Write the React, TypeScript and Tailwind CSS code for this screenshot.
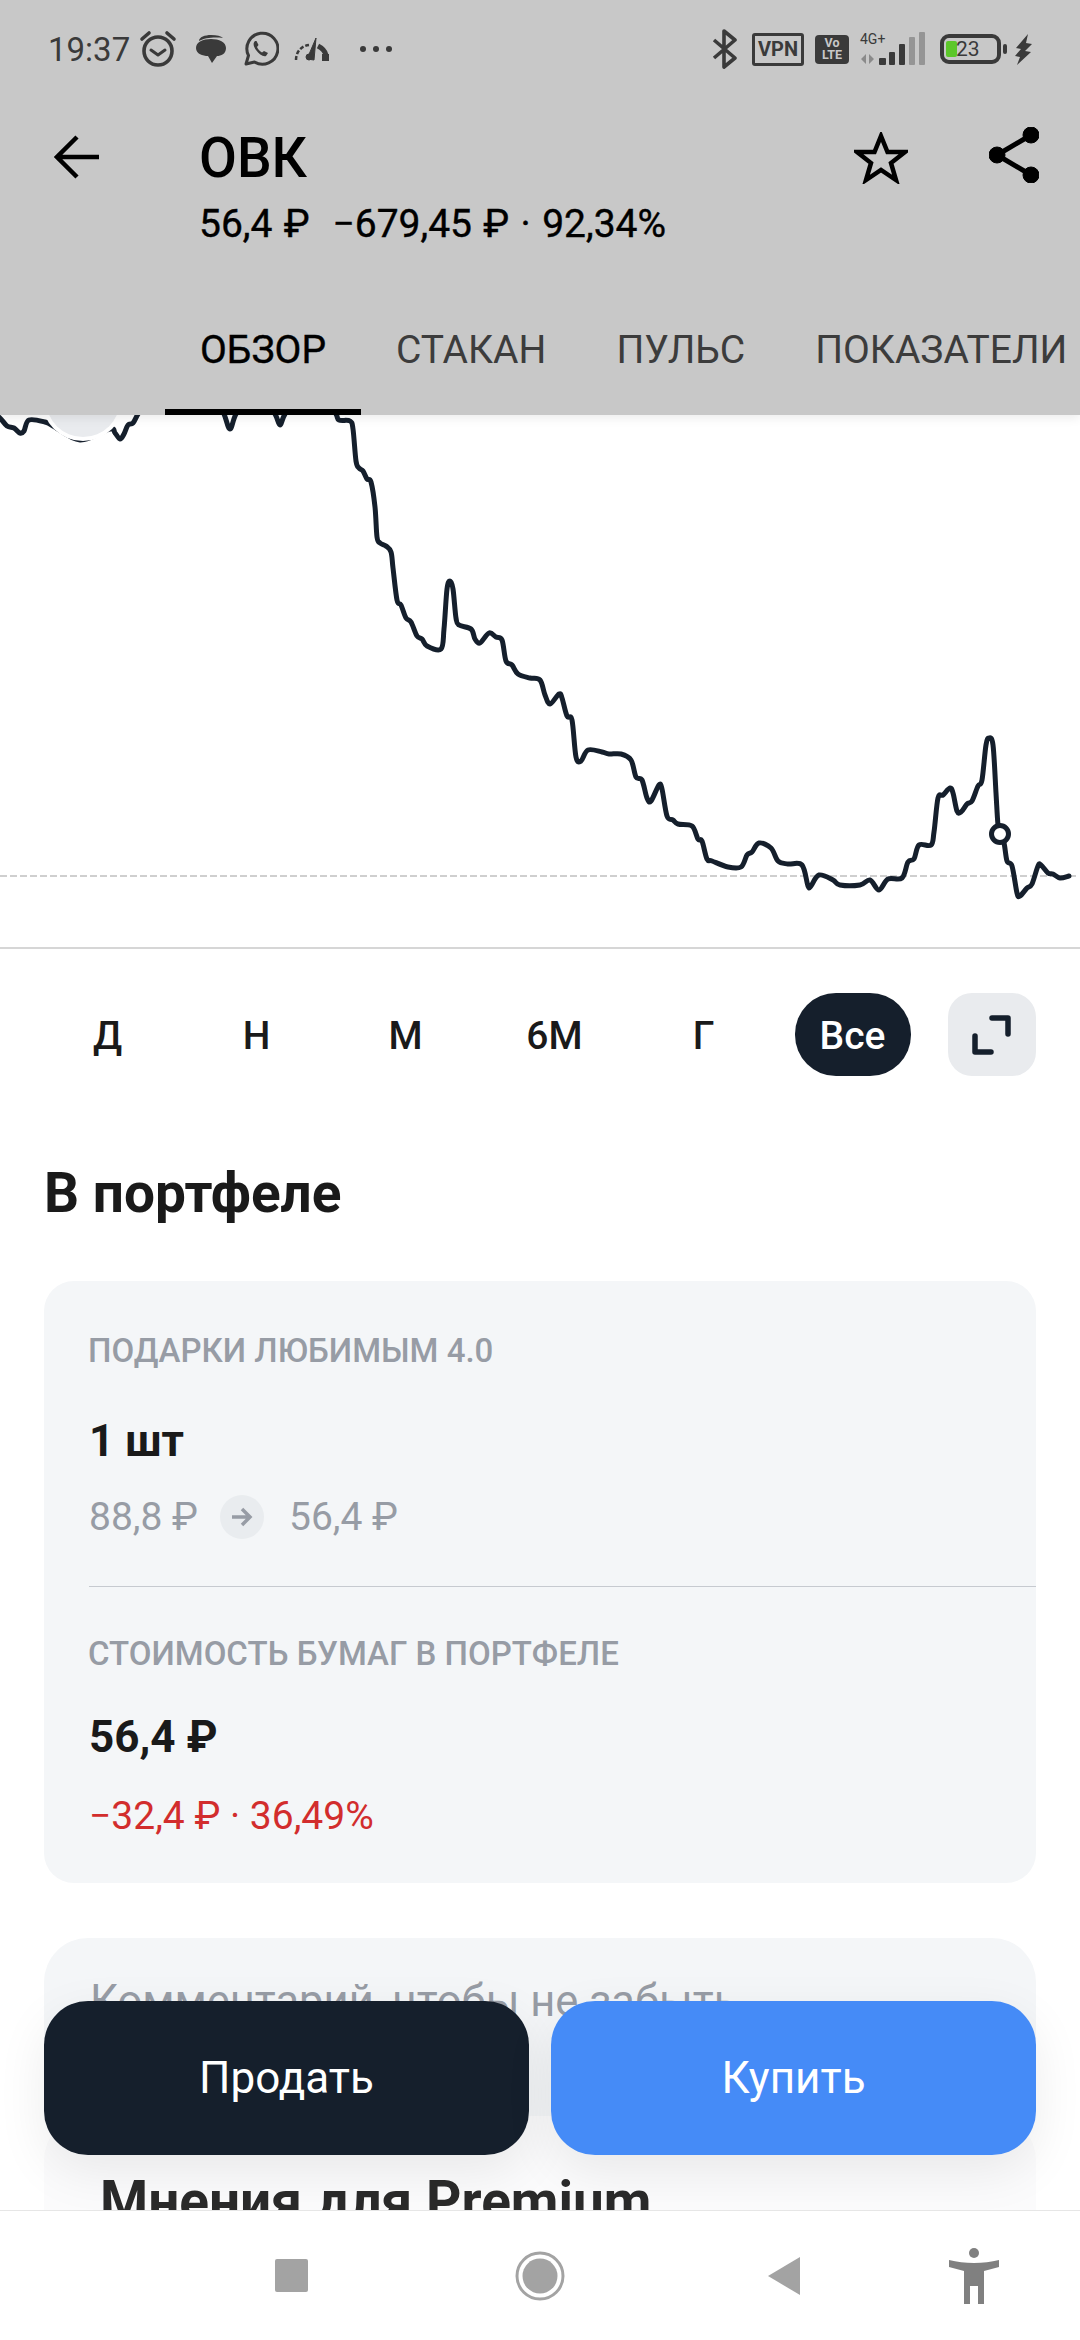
const tabs = ["ОБЗОР", "СТАКАН", "ПУЛЬС", "ПОКАЗАТЕЛИ"];
const periods = ["Д", "Н", "М", "6М", "Г", "Все"];

const chartPoints: [number, number][] = [
  [-6, 414], [0, 418], [7, 426], [14, 428], [20, 433], [24, 431], [29, 420], [45, 422], [53, 426], [80, 440], [110, 429], [115, 433],
  [120, 439], [124, 434], [128, 425], [133, 423], [138, 414], [150, 395], [215, 395], [224, 414], [230, 429], [236, 414], [250, 395],
  [262, 395], [275, 414], [280, 425], [285, 414], [300, 395], [325, 395], [336, 414], [339, 420], [350, 421], [353, 429], [356, 461],
  [359, 468], [363, 471], [367, 479], [371, 482], [375, 507], [377, 537], [380, 543], [386, 546], [391, 552], [393, 568], [397, 600],
  [401, 605], [406, 618], [411, 622], [417, 636], [422, 639], [427, 646], [441, 649], [444, 629], [447, 589], [450, 581], [453, 589],
  [456, 618], [459, 625], [471, 629], [475, 639], [480, 643], [489, 633], [496, 637], [502, 640], [506, 661], [512, 665], [518, 674],
  [530, 678], [540, 680], [545, 695], [550, 704], [559, 694], [562, 698], [567, 716], [572, 720], [576, 757], [581, 761], [588, 750],
  [602, 752], [609, 754], [621, 754], [631, 760], [636, 777], [642, 780], [647, 798], [651, 801], [659, 785], [662, 789], [667, 816],
  [673, 820], [678, 824], [692, 826], [698, 839], [702, 841], [707, 859], [712, 861], [728, 867], [741, 867], [747, 855], [752, 852],
  [759, 843], [771, 848], [778, 861], [788, 864], [802, 865], [808, 886], [811, 886], [819, 875], [833, 880], [840, 885], [860, 885],
  [870, 880], [879, 890], [888, 879], [902, 878], [908, 862], [914, 859], [919, 845], [931, 845], [934, 832], [938, 798], [943, 795],
  [950, 788], [953, 793], [957, 811], [961, 812], [967, 804], [972, 801], [978, 786], [982, 780], [986, 745], [989, 738], [993, 745],
  [996, 793], [998, 825], [1000, 834], [1004, 843], [1007, 861], [1012, 866], [1017, 893], [1020, 896], [1027, 888], [1032, 884],
  [1038, 866], [1041, 865], [1048, 873], [1053, 874], [1060, 878], [1069, 876],
];

// catmull-rom through the points so the line doesn't look chopped
function smoothPath(pts: [number, number][]) {
  let d = `M${pts[0][0]} ${pts[0][1]}`;
  for (let i = 0; i < pts.length - 1; i++) {
    const p0 = pts[Math.max(i - 1, 0)];
    const p1 = pts[i];
    const p2 = pts[i + 1];
    const p3 = pts[Math.min(i + 2, pts.length - 1)];
    const c1x = p1[0] + (p2[0] - p0[0]) / 6;
    const c1y = p1[1] + (p2[1] - p0[1]) / 6;
    const c2x = p2[0] - (p3[0] - p1[0]) / 6;
    const c2y = p2[1] - (p3[1] - p1[1]) / 6;
    d += ` C${c1x.toFixed(1)} ${c1y.toFixed(1)} ${c2x.toFixed(1)} ${c2y.toFixed(1)} ${p2[0]} ${p2[1]}`;
  }
  return d;
}

function StatusBar() {
  return (
    <div className="h-[98px] flex items-center justify-between pl-[48px] pr-[47px] text-[#3a3a3a]">
      <div className="flex items-center">
        <span className="text-[33px] leading-none w-[88px]">19:37</span>
        <svg width="42" height="38" viewBox="0 0 42 38" fill="none" stroke="#3a3a3a" strokeWidth="3.6" className="ml-[1px]">
          <circle cx="21" cy="21" r="14" />
          <path d="M14 20l7 5 7-5" strokeWidth="3" strokeLinecap="round" strokeLinejoin="round" />
          <path d="M5 9l7-6M37 9l-7-6" strokeLinecap="round" />
        </svg>
        <svg width="30" height="28" viewBox="0 0 30 28" fill="#3a3a3a" className="ml-[17px]">
          <path d="M3 6C3 2 9 0 15 0c6 0 10 1 12 3-6-1-18-1-24 3z" />
          <path d="M15 4c8 0 15 3 15 9s-5 8-9 8l-5 7-4-7c-5 0-12-2-12-8s7-9 15-9z" />
        </svg>
        <svg width="36" height="36" viewBox="0 0 36 36" fill="none" stroke="#3a3a3a" strokeWidth="3" className="ml-[17px]">
          <path d="M3 33l2.5-8.5A15.5 15.5 0 1 1 11.5 31z" strokeLinejoin="round" />
          <path d="M12 10c-2 2-2 5 1 9s7 7 10 6l2-3-4-2-2 1.500c-2-1-4-3-5-5.500l1.500-2-2-4z" fill="#3a3a3a" stroke="none" />
        </svg>
        <svg width="36" height="25" viewBox="0 0 36 25" fill="none" stroke="#3a3a3a" className="ml-[15px]">
          <path d="M2 23c0-8 5-14 13-15" strokeWidth="2.500" strokeDasharray="4 2" />
          <path d="M24 9c4 2 7 5 8 9" strokeWidth="5" />
          <path d="M13 22L22 1l-2 22z" fill="#3a3a3a" strokeWidth="1" />
          <circle cx="15" cy="20" r="3" fill="#3a3a3a" strokeWidth="1" />
          <rect x="28" y="17" width="7" height="7" fill="#3a3a3a" stroke="none" />
        </svg>
        <div className="flex gap-[7px] ml-[30px]">
          <div className="w-[6px] h-[6px] rounded-full bg-[#3a3a3a]" />
          <div className="w-[6px] h-[6px] rounded-full bg-[#3a3a3a]" />
          <div className="w-[6px] h-[6px] rounded-full bg-[#3a3a3a]" />
        </div>
      </div>
      <div className="flex items-center">
        <svg width="26" height="40" viewBox="0 0 26 40" fill="none" stroke="#3a3a3a" strokeWidth="3.6" strokeLinejoin="round">
          <path d="M2 11l21 18-11 9V2l11 9L2 29" />
        </svg>
        <div className="ml-[14px] w-[52px] h-[33px] border-[3px] border-[#3a3a3a] rounded-[3px] flex items-center justify-center text-[20px] font-bold leading-none">VPN</div>
        <div className="ml-[11px] w-[34px] h-[29px] bg-[#3a3a3a] rounded-[4px] flex flex-col items-center justify-center text-[#c8c8c8] text-[12.500px] font-bold leading-[12.500px]">
          <span>Vo</span>
          <span>LTE</span>
        </div>
        <div className="ml-[11px] w-[66px] h-[34px] flex flex-col justify-between">
          <span className="text-[14px] leading-[14px]">4G+</span>
          <svg width="66" height="34" viewBox="0 0 66 34" className="-mt-[14px]">
            <path d="M6 22v10L1 27zM9 22l5 5-5 5zM15 22v10" fill="#8a8a8a" />
            <rect x="19" y="26" width="7" height="7" rx="1" fill="#3a3a3a" />
            <rect x="29" y="20" width="6" height="13" rx="1" fill="#3a3a3a" />
            <rect x="39" y="12" width="6" height="21" rx="1" fill="#3a3a3a" />
            <rect x="49" y="5" width="6" height="28" rx="1" fill="#959595" />
            <rect x="59" y="0" width="6" height="33" rx="1" fill="#959595" />
          </svg>
        </div>
        <div className="ml-[14px] w-[61px] h-[30px] border-[4px] border-[#3a3a3a] rounded-[9px] flex items-center p-[2px]">
          <div className="w-[11px] h-[16px] bg-[#5cc72a] rounded-[2px] shrink-0" />
          <span className="text-[21px] leading-none text-[#3a3a3a] -ml-[1px]">23</span>
        </div>
        <div className="ml-[2px] w-[4px] h-[10px] bg-[#3a3a3a] rounded-[2px]" />
        <svg width="18" height="31" viewBox="0 0 18 31" fill="#3a3a3a" className="ml-[8px]">
          <path d="M13 0L1 14l5 1-6 7 5 1-3 8 14-13-6-1 7-7-6-1z" />
        </svg>
      </div>
    </div>
  );
}

function Header() {
  return (
    <header className="h-[415px] shrink-0 bg-[#c8c8c8] relative z-10 shadow-[0_3px_10px_rgba(0,0,0,0.08)]">
      <StatusBar />
      <div className="flex items-start pt-[30px] pl-[54px] pr-[41px]">
        <svg width="46" height="44" viewBox="0 0 46 44" fill="none" stroke="#000" strokeWidth="4.500" className="mt-[7px]">
          <path d="M45 22H3M23 2L3 22l20 20" />
        </svg>
        <div className="ml-[99px] flex-1">
          <div className="text-[55px] leading-[60px] font-medium text-black">ОВК</div>
          <div className="mt-[14px] text-[39px] leading-[44px] text-black whitespace-pre [word-spacing:1.700px] [-webkit-text-stroke:0.4px_#000]">56,4 ₽  −679,45 ₽ · 92,34%</div>
        </div>
        <svg width="54" height="52" viewBox="0 0 54 52" fill="none" stroke="#000" strokeWidth="4.500" className="mt-[4px]">
          <path d="M27 4l6.500 16H51L37 31l5 17-15-10-15 10 5-17L3 20h17.500z" strokeLinejoin="miter" />
        </svg>
        <svg width="50" height="56" viewBox="0 0 50 56" className="ml-[81px] -mt-[1px]" fill="#000" stroke="#000">
          <path d="M42 8L8 28l34 20" fill="none" strokeWidth="5" />
          <circle cx="42" cy="8" r="8" />
          <circle cx="8" cy="28" r="8" />
          <circle cx="42" cy="48" r="8" />
        </svg>
      </div>
      <div className="flex pl-[165px] mt-[39px] whitespace-nowrap">
        {tabs.map((t, i) => (
          <div
            key={t}
            className={`h-[130px] px-[35px] flex items-center pt-[6px] border-b-[6px] text-[39px] ${
              i === 0 ? "border-black text-black [-webkit-text-stroke:0.4px_#000]" : "border-transparent text-[#3c3c3c]"
            }`}
          >
            {t}
          </div>
        ))}
      </div>
    </header>
  );
}

function Chart() {
  return (
    <div className="h-[534px] border-b-2 border-[#d6d6d6]">
      <svg width="1080" height="532" viewBox="0 415 1080 532" className="block">
        <line x1="0" y1="876" x2="1076" y2="876" stroke="#cfcfcf" strokeWidth="2" strokeDasharray="7 3" />
        <path d={smoothPath(chartPoints)} fill="none" stroke="#151f2c" strokeWidth="5" strokeLinejoin="round" strokeLinecap="round" />
        <circle cx="83" cy="400" r="41" fill="#fff" />
        <circle cx="83" cy="400" r="37" fill="#e9ebee" />
        <circle cx="1000" cy="834" r="8.500" fill="#fff" stroke="#151f2c" strokeWidth="5" />
      </svg>
    </div>
  );
}

function PeriodRow() {
  return (
    <div className="flex items-start pt-[44px] pl-[33px]">
      {periods.map((p) => (
        <div key={p} className="w-[149px] flex justify-center">
          {p === "Все" ? (
            <div className="w-[116px] h-[83px] rounded-[41px] bg-[#151f2c] text-white flex items-center justify-center pt-[3px] text-[39px] font-medium">{p}</div>
          ) : (
            <div className="h-[83px] flex items-center pt-[3px] text-[39px] font-medium text-[#1a1a1a]">{p}</div>
          )}
        </div>
      ))}
      <div className="ml-[21px] w-[88px] h-[83px] rounded-[24px] bg-[#e9ebee] flex items-center justify-center">
        <svg width="40" height="40" viewBox="0 0 40 40" fill="none" stroke="#151f2c" strokeWidth="5.500" strokeLinecap="round" strokeLinejoin="round">
          <path d="M20 3h16v16M3 21v16h16" />
        </svg>
      </div>
    </div>
  );
}

function PortfolioCard() {
  return (
    <div className="mx-[44px] h-[602px] rounded-[30px] bg-[#f4f6f8] pt-[50px] pl-[45px]">
      <div className="-ml-[1px] text-[33px] leading-[40px] font-medium text-[#979ca5]">ПОДАРКИ ЛЮБИМЫМ 4.0</div>
      <div className="mt-[45px] text-[44px] leading-[50px] font-bold text-[#1a1a1a]">1 шт</div>
      <div className="mt-[29px] flex items-center text-[39px] leading-[44px] text-[#979ca5]">
        <span>88,8 ₽</span>
        <div className="ml-[22px] w-[44px] h-[44px] rounded-full bg-[#e9ecef] flex items-center justify-center">
          <svg width="22" height="20" viewBox="0 0 22 20" fill="none" stroke="#979ca5" strokeWidth="3.500">
            <path d="M1 10h18M11 2l8 8-8 8" />
          </svg>
        </div>
        <span className="ml-[25px]">56,4 ₽</span>
      </div>
      <div className="mt-[47px] h-px bg-[#c6cad0]" />
      <div className="-ml-[1px] mt-[47px] text-[33px] leading-[40px] font-medium text-[#979ca5]">СТОИМОСТЬ БУМАГ В ПОРТФЕЛЕ</div>
      <div className="mt-[38px] text-[44px] leading-[50px] font-bold text-[#1a1a1a]">56,4 ₽</div>
      <div className="mt-[32px] text-[39px] leading-[44px] text-[#d22d2d]">−32,4 ₽ · 36,49%</div>
    </div>
  );
}

export default function App() {
  return (
    <div className="w-[1080px] h-[2340px] flex flex-col bg-white overflow-hidden" style={{ fontFamily: "Roboto, sans-serif" }}>
      <Header />
      <main className="relative flex-1 overflow-hidden">
        <Chart />
        <PeriodRow />
        <h2 className="mt-[87px] ml-[44px] h-[118px] text-[55px] leading-[60px] font-bold text-[#1a1a1a]">В портфеле</h2>
        <PortfolioCard />
        <div className="mx-[44px] mt-[55px] h-[178px] rounded-t-[44px] bg-[#f4f6f8] pt-[39px] pl-[46px] text-[43.500px] leading-[50px] text-[#979ca5]">Комментарий, чтобы не забыть</div>
        <div className="mx-[44px] h-[200px] rounded-t-[44px] bg-[#fbfbfc] pt-[55px] pl-[56px] text-[55px] leading-[60px] font-bold text-[#2a2a2a]">Мнения для Premium</div>
        <div className="absolute top-[1586px] left-[44px] right-[44px] flex gap-[22px]">
          <button className="flex-1 h-[154px] rounded-[44px] bg-[#151f2c] text-white text-[44px] shadow-[0_16px_50px_rgba(0,0,0,0.08)]">Продать</button>
          <button className="flex-1 h-[154px] rounded-[44px] bg-[#458bf7] text-white text-[44px] shadow-[0_16px_50px_rgba(0,0,0,0.08)]">Купить</button>
        </div>
      </main>
      <nav className="h-[130px] shrink-0 relative z-10 bg-white border-t border-[#e6e6e6] flex items-center pl-[275px]">
        <div className="w-[33px] h-[33px] rounded-[2px] bg-[#a3a3a3]" />
        <svg width="50" height="50" viewBox="0 0 50 50" className="ml-[207px]">
          <circle cx="25" cy="25" r="23" fill="none" stroke="#a3a3a3" strokeWidth="3" />
          <circle cx="25" cy="25" r="17.500" fill="#a3a3a3" />
        </svg>
        <svg width="32" height="38" viewBox="0 0 32 38" className="ml-[203px]">
          <path d="M32 0v38L0 19z" fill="#a3a3a3" />
        </svg>
        <svg width="50" height="56" viewBox="0 0 50 56" className="ml-[149px]" fill="#808080">
          <circle cx="25" cy="5" r="5" />
          <path d="M0 12c8 2 16 3 25 3s17-1 25-3v7l-15 4v33h-6V38h-8v18h-6V23L0 19z" />
        </svg>
      </nav>
    </div>
  );
}
